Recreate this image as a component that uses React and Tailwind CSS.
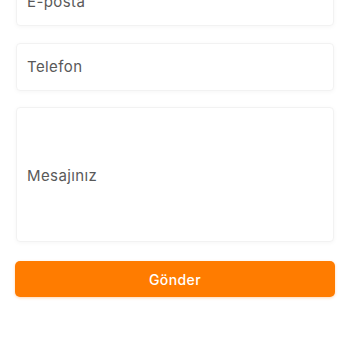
export default function App() {
  const font = { fontFamily: "Inter, 'Open Sans', sans-serif" };
  return (
    <div className="w-[350px] h-[350px] bg-white overflow-hidden relative" style={font}>
      <div className="flex flex-col px-[16px] mt-[-22px]">
        <div className="h-[48px] rounded-[4px] border border-[#f2f2f2] shadow-[0_1px_4px_rgba(0,0,0,0.04)] flex items-center pl-[10px] pt-[1px] text-[15px] text-[#595959] tracking-[0.4px]">
          E-posta
        </div>
        <div className="h-[48px] mt-[17px] rounded-[4px] border border-[#f2f2f2] shadow-[0_1px_4px_rgba(0,0,0,0.04)] flex items-center pl-[10px] pt-[1px] text-[15px] text-[#595959] tracking-[0.4px]">
          Telefon
        </div>
        <div className="h-[135px] mt-[16px] rounded-[4px] border border-[#f2f2f2] shadow-[0_1px_4px_rgba(0,0,0,0.04)] flex items-center pl-[10px] pt-[3px] text-[15px] text-[#595959] tracking-[0.4px]">
          Mesajınız
        </div>
        <button className="h-[36px] mt-[19px] mx-[-1px] rounded-[5px] bg-[#ff7c00] text-white text-[14px] font-medium tracking-[0.4px] shadow-[0_1px_3px_rgba(255,124,0,0.3)]">
          Gönder
        </button>
      </div>
    </div>
  );
}
